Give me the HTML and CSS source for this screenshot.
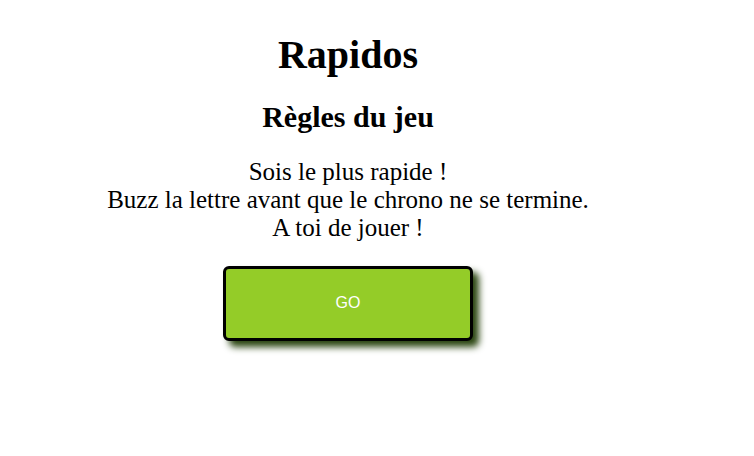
FILE: index.html
```html
<!DOCTYPE html>
<html lang="fr">
<head>
<meta charset="utf-8">
<title>Rapidos</title>
<link rel="stylesheet" href="styles.css">
</head>
<body>
<main class="page">
  <h1 class="title">Rapidos</h1>
  <h2 class="subtitle">Règles du jeu</h2>
  <p class="rules">Sois le plus rapide !<br>Buzz la lettre avant que le chrono ne se termine.<br>A toi de jouer !</p>
  <div class="actions">
    <button class="go-btn" type="button">GO</button>
  </div>
</main>
</body>
</html>
```
FILE: styles.css
```css
html, body {
  margin: 0;
  padding: 0;
  background: #ffffff;
}

.page {
  width: 680px;
  margin-left: 8px;
  padding-top: 32px;
  padding-bottom: 60px;
  text-align: center;
  font-family: "Liberation Serif", "Times New Roman", serif;
  color: #000;
}

.title {
  margin: 0;
  font-size: 40px;
  line-height: 46px;
  font-weight: bold;
}

.subtitle {
  margin: 22px 0 0;
  font-size: 30px;
  line-height: 34px;
  font-weight: bold;
}

.rules {
  margin: 24px 0 0;
  font-size: 25px;
  line-height: 28px;
}

.actions {
  display: flex;
  justify-content: center;
  margin-top: 24px;
}

.go-btn {
  box-sizing: border-box;
  width: 250px;
  height: 75px;
  border: 3px solid #000;
  border-radius: 6px;
  background: #94cc28;
  color: #fff;
  font-family: "Liberation Sans", Arial, sans-serif;
  font-size: 16px;
  box-shadow: 6px 6px 7px #2a4510;
  cursor: pointer;
  padding: 0 0 2px;
}
```
